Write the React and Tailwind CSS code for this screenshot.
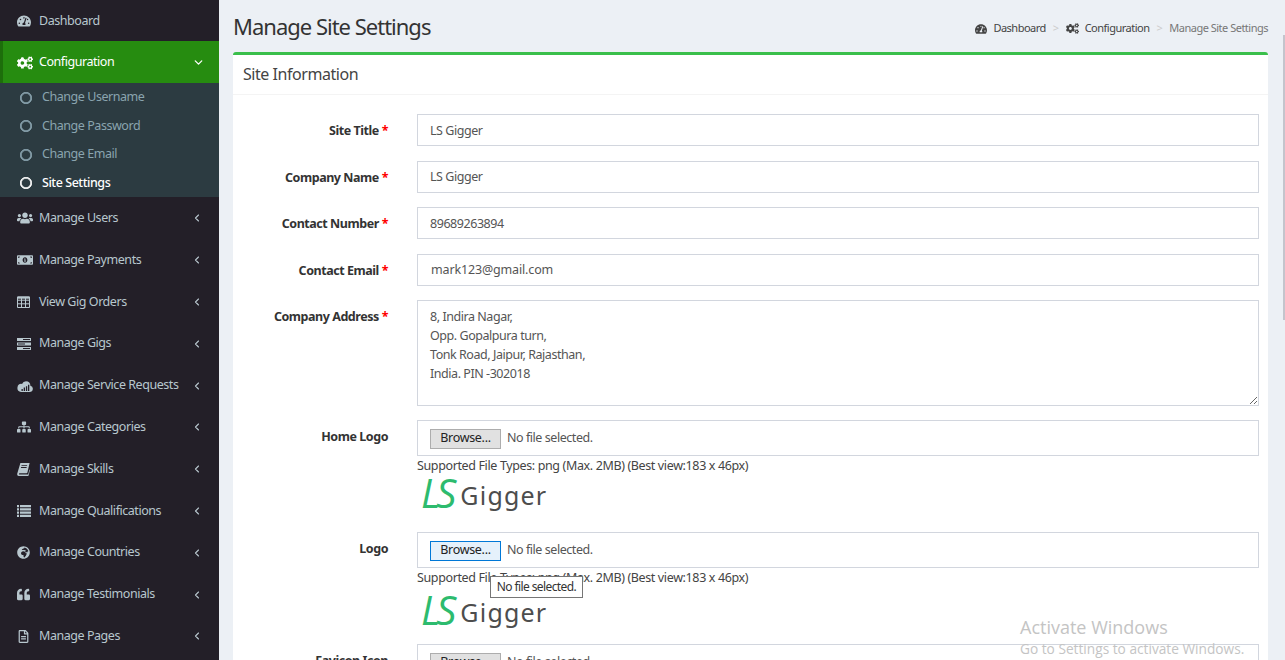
import {
  FaTachometerAlt,
  FaCogs,
  FaUsers,
  FaMoneyBillAlt,
  FaSitemap,
  FaGlobeAfrica,
  FaQuoteLeft,
  FaRegFileAlt,
  FaRegCircle,
} from "react-icons/fa";
import { ChevronLeft, ChevronDown } from "lucide-react";

const CloudIcon = () => (
  <svg width="16" height="14" viewBox="0 0 16 14">
    <path
      fill="currentColor"
      d="M4 13h8.5a3.2 3.2 0 0 0 .9-6.3A4.6 4.6 0 0 0 9 2.2a4.4 4.4 0 0 0-4 2.7A4 4 0 0 0 4 13z"
    />
    <path fill="#231f28" d="M4.5 10h1.3v2H4.5zM6.7 8.6H8V12H6.7zM8.9 7.2h1.3V12H8.9zM11 5.8h1.3V12H11z" />
  </svg>
);

const BookIcon = () => (
  <svg width="13" height="14" viewBox="0 0 13 14">
    <path
      fill="currentColor"
      d="M3.4 1H12.6L10.4 10.5a1 1 0 0 1-1 .8H2.6c-.9 0-.9 1.3 0 1.3h8.6l1.2-5.2.5.7-1.2 5.2a.9.9 0 0 1-.9.7H1.6C.6 13.7 0 12.9.2 11.8z"
    />
    <path fill="#231f28" d="M4.6 3.2h5.6l-.2.9H4.4zM4.1 5.1h5.6l-.2.9H3.9z" />
  </svg>
);

// outlined grid, the font awesome 5 table is too heavy here
const TableIcon = () => (
  <svg width="13" height="12" viewBox="0 0 13 12">
    <path
      fill="none"
      stroke="currentColor"
      d="M.5 1h12v10.5H.5zM.5 4.2h12M.5 7.8h12M4.5 1v10.5M8.5 1v10.5"
    />
    <path fill="currentColor" d="M.5 .5h12v2.2H.5z" />
  </svg>
);

const GigsIcon = () => (
  <svg width="14" height="12" viewBox="0 0 14 12">
    <path fill="currentColor" d="M0 0h14v3H0zM0 4.5h14v3H0zM0 9h14v3H0z" />
    <path fill="#231f28" d="M6 1h7v1H6zM1 5.5h7v1H1zM6 10h7v1H6z" />
  </svg>
);

const ListIcon = () => (
  <svg width="14" height="12" viewBox="0 0 14 12">
    <path
      fill="currentColor"
      d="M0 0h2v2.2H0zM3 0h11v2.2H3zM0 3.2h2v2.2H0zM3 3.2h11v2.2H3zM0 6.5h2v2.2H0zM3 6.5h11v2.2H3zM0 9.8h2V12H0zM3 9.8h11V12H3z"
    />
  </svg>
);

const menu = [
  { label: "Manage Users", icon: <FaUsers size={16} /> },
  { label: "Manage Payments", icon: <FaMoneyBillAlt size={16} /> },
  { label: "View Gig Orders", icon: <TableIcon /> },
  { label: "Manage Gigs", icon: <GigsIcon /> },
  { label: "Manage Service Requests", icon: <CloudIcon /> },
  { label: "Manage Categories", icon: <FaSitemap size={14} /> },
  { label: "Manage Skills", icon: <BookIcon /> },
  { label: "Manage Qualifications", icon: <ListIcon /> },
  { label: "Manage Countries", icon: <FaGlobeAfrica size={13} /> },
  { label: "Manage Testimonials", icon: <FaQuoteLeft size={13} /> },
  { label: "Manage Pages", icon: <FaRegFileAlt size={13} /> },
];

const subMenu = ["Change Username", "Change Password", "Change Email", "Site Settings"];

const Sidebar = () => (
  <aside className="w-[219px] shrink-0 bg-[#231f28] text-[#b8c7ce]">
    <div className="flex h-[41px] items-center pl-[17px] pt-[1px]">
      <span className="w-[22px]">
        <FaTachometerAlt size={14} />
      </span>
      Dashboard
    </div>
    <div className="flex h-[42px] items-center border-l-[3px] border-[#1d6e0b] bg-[#268c10] pl-[14px] pt-[1px] text-white">
      <span className="w-[22px]">
        <FaCogs size={16} />
      </span>
      Configuration
      <ChevronDown size={13} strokeWidth={2.4} className="ml-auto mr-[14px]" />
    </div>
    <ul className="bg-[#2c3b41] py-0">
      {subMenu.map((item, i) => (
        <li
          key={item}
          className={`flex h-[28.5px] items-center pl-[20px] pt-[1px] ${
            i === 3 ? "font-medium text-white" : "text-[#8aa4af]"
          }`}
        >
          <FaRegCircle size={12} className="mr-[10px] stroke-[30px]" />
          {item}
        </li>
      ))}
    </ul>
    {menu.map((item) => (
      <div key={item.label} className="flex h-[41.8px] items-center pl-[17px] pt-[1px]">
        <span className="flex w-[22px] items-center">{item.icon}</span>
        {item.label}
        <ChevronLeft size={12} strokeWidth={2.2} className="ml-auto mr-[16px]" />
      </div>
    ))}
  </aside>
);

const Field = ({ label, required = true, children, className = "" }) => (
  <div className={`flex items-start pr-[9px] ${className}`}>
    <label className="w-[155px] shrink-0 pt-[8px] text-right font-bold leading-[18px] text-[#333]">
      {label}
      {required && <span className="text-[#f00]"> *</span>}
    </label>
    <div className="ml-[29px] min-w-0 flex-1">{children}</div>
  </div>
);

const TextField = ({ label, value, wide }) => (
  <Field label={label} className="mb-[14.5px]">
    <input
      readOnly
      value={value}
      className={`block h-[32px] w-full border border-[#d2d6de] text-[#555] outline-none ${
        wide ? "pl-[13px] tracking-[-0.15px]" : "pl-[12px]"
      }`}
    />
  </Field>
);

const Logo = ({ top }) => (
  <div className={`flex h-[58px] items-start pl-[4px] ${top}`}>
    <span className="font-['Open_Sans',sans-serif] text-[40px] italic leading-[36px] tracking-[-4px] text-[#2dbb6e]">
      LS
    </span>
    <span className="ml-[8px] pt-[3px] font-['Noto_Sans',sans-serif] text-[25px] leading-[34px] tracking-[1.2px] text-[#4d4d4d]">
      Gigger
    </span>
  </div>
);

const BrowseButton = ({ focused }) => (
  <span
    className={`mr-[6px] flex h-[20px] w-[71px] items-center justify-center border tracking-[-0.3px] text-[#222] ${
      focused ? "border-[#0078d7] bg-[#e5f1fb]" : "border-[#adadad] bg-[#e1e1e1]"
    }`}
  >
    Browse...
  </span>
);

const FileField = ({ label, focused, top, tooltip }) => (
  <Field label={label} required={false}>
    <div className="relative">
      <div className="flex h-[36px] items-center border border-[#d2d6de] pl-[12px] pt-[1px] text-[#555]">
        <BrowseButton focused={focused} />
        No file selected.
      </div>
      <p className="h-[18px] pt-[1px] tracking-[-0.37px] leading-[18px] text-[#444]">
        Supported File Types: png (Max. 2MB) (Best view:183 x 46px)
      </p>
      <Logo top={top} />
      {tooltip && (
        <div className="absolute left-[73px] top-[44px] flex h-[22px] w-[93px] items-center justify-center border border-[#767676] bg-white text-[12px] tracking-[-0.6px] text-[#333]">
          No file selected.
        </div>
      )}
    </div>
  </Field>
);

export default function App() {
  return (
    <div className="relative flex h-[660px] overflow-hidden bg-[#ecf0f5] font-['Noto_Sans',sans-serif] text-[12.5px] tracking-[-0.45px]">
      <Sidebar />
      <main className="min-w-0 flex-1 pl-[14px] pr-[17px]">
        <div className="flex h-[52px] items-center justify-between">
          <h1 className="text-[22px] tracking-[-1px] text-[#333]">Manage Site Settings</h1>
          <nav className="flex items-center pt-[5px] text-[11px] tracking-[-0.5px] text-[#444]">
            <FaTachometerAlt size={12} className="mr-[6px]" />
            Dashboard
            <span className="mx-[7px] text-[#ccc]">&gt;</span>
            <FaCogs size={13} className="mr-[6px]" />
            Configuration
            <span className="mx-[7px] text-[#ccc]">&gt;</span>
            <span className="text-[#777]">Manage Site Settings</span>
          </nav>
        </div>
        <section className="rounded-t-[3px] border-t-[3px] border-[#3abf4b] bg-white">
          <h2 className="flex h-[40px] items-center border-b border-[#f4f4f4] pb-[1px] pl-[10px] text-[16px] tracking-[-0.45px] text-[#444]">
            Site Information
          </h2>
          <form className="pt-[19px]">
            <TextField label="Site Title" value="LS Gigger" />
            <TextField label="Company Name" value="LS Gigger" />
            <TextField label="Contact Number" value="89689263894" />
            <TextField label="Contact Email" value="mark123@gmail.com" wide />
            <Field label="Company Address" className="mb-[14px]">
              <textarea
                readOnly
                className="block h-[106px] w-full resize-y border border-[#d2d6de] px-[12px] py-[6px] leading-[19px] text-[#555] outline-none"
                defaultValue={"8, Indira Nagar,\nOpp. Gopalpura turn,\nTonk Road, Jaipur, Rajasthan,\nIndia. PIN -302018"}
              />
            </Field>
            <FileField label="Home Logo" top="pt-[1px]" />
            <FileField label="Logo" focused top="pt-[6px]" tooltip />
            <Field label="Favicon Icon" required={false}>
              <div className="flex h-[36px] items-center border border-[#d2d6de] pl-[12px] pt-[1px] text-[#555]">
                <BrowseButton />
                No file selected.
              </div>
            </Field>
          </form>
        </section>
      </main>
      {/* thin page scrollbar */}
      <div className="absolute right-0 top-[35px] h-[285px] w-[2px] bg-[#c4c4cc]" />
      {/* windows watermark */}
      <div className="pointer-events-none absolute left-[1020px] top-[615px] font-['Open_Sans',sans-serif] tracking-normal text-[#c4c4c4]">
        <p className="text-[18px] leading-[25px]">Activate Windows</p>
        <p className="text-[13.7px] leading-[18px]">Go to Settings to activate Windows.</p>
      </div>
    </div>
  );
}
